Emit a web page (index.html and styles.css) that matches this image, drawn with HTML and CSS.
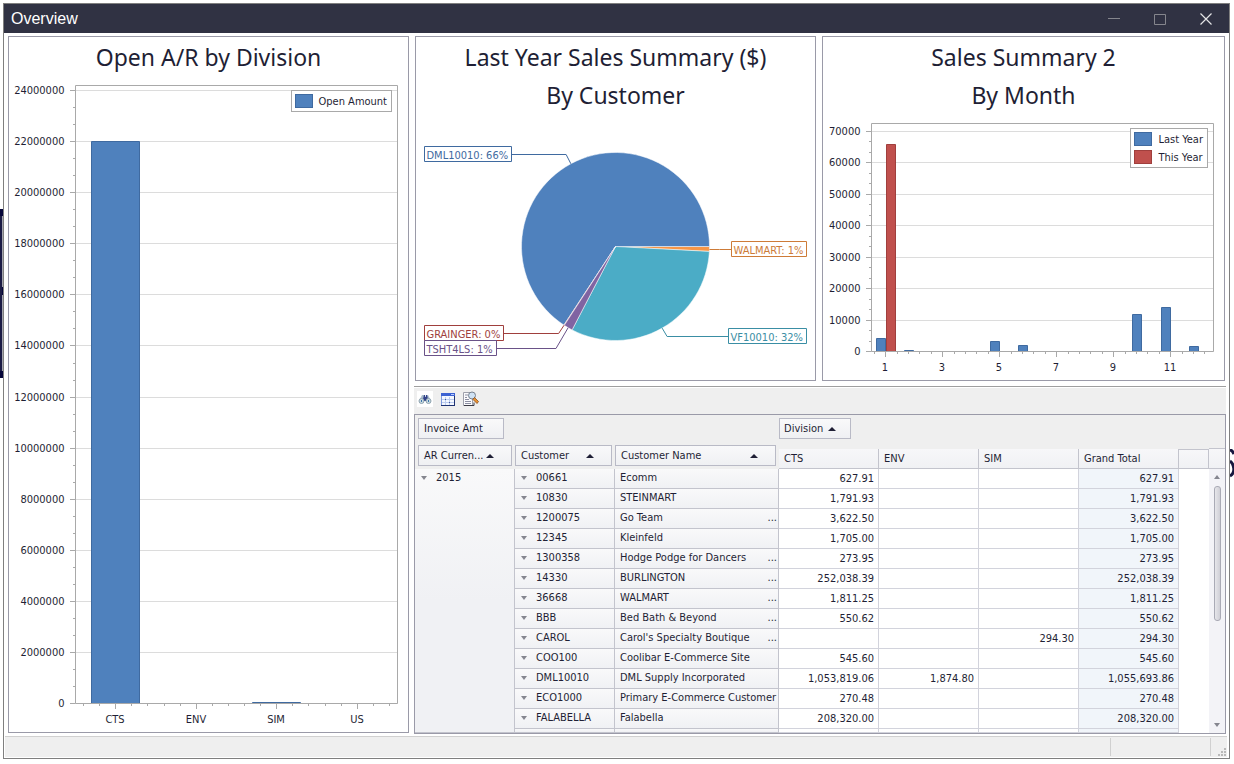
FILE: index.html
```html
<!DOCTYPE html>
<html lang="en">
<head>
    <meta charset="UTF-8">
    <meta name="viewport" content="width=device-width, initial-scale=1.0">
    <title>Overview</title>
    <link rel="stylesheet" href="styles.css">
</head>
<body>

    <!-- pieces of the desktop that show behind the window -->
    <svg class="behind-left" width="3" height="172" aria-hidden="true">
        <path d="M0 1h3v7H0zM0 79h3v8H0zM0 163h3v7H0z" fill="#06063a"/>
        <path d="M0 8h2v155H0z" fill="#1c1c45"/>
        <path d="M2 8h1v71H2zM2 87h1v76H2z" fill="#a5a5ad"/>
    </svg>
    <svg class="behind-right" width="4" height="30" aria-hidden="true">
        <path d="M0 1C2 1 3 3 4 5M0 12C3 14 5 20 3 24Q2 26 0 27" fill="none" stroke="#17173f" stroke-width="3"/>
    </svg>

    <div class="window">
        <header class="titlebar">
            <h1>Overview</h1>
            <div class="window-buttons">
                <button type="button" aria-label="Minimize"><svg width="12" height="12"><path d="M0 5.5h12" stroke="#85868d"/></svg></button>
                <button type="button" aria-label="Maximize"><svg width="12" height="12"><path d="M.5 1.5h11v10H.5z" fill="none" stroke="#85868d"/></svg></button>
                <button type="button" aria-label="Close"><svg width="12" height="12"><path d="M.5 .5l11 11M11.5 .5l-11 11" stroke="#e4e4e6" stroke-width="1.2"/></svg></button>
            </div>
        </header>

        <main class="dashboard">
            <section class="panel panel-tall">
                <h2>Open A/R by Division</h2>
                <div class="chart">
                    <svg id="division-chart"></svg>
                    <ul class="legend">
                        <li><span class="swatch blue"></span>Open Amount</li>
                    </ul>
                </div>
            </section>

            <section class="panel">
                <h2>Last Year Sales Summary ($)<br>By Customer</h2>
                <div class="chart">
                    <svg id="customer-chart"></svg>
                </div>
            </section>

            <section class="panel">
                <h2>Sales Summary 2<br>By Month</h2>
                <div class="chart">
                    <svg id="month-chart"></svg>
                    <ul class="legend">
                        <li><span class="swatch blue"></span>Last Year</li>
                        <li><span class="swatch red"></span>This Year</li>
                    </ul>
                </div>
            </section>

            <section class="details">
                <div class="toolbar">
                    <button type="button" class="find" aria-label="Find">
                        <svg width="16" height="16">
                            <path d="M5 4h2l1 2 1-2h2l2 4-4 1H7L3 8z" fill="#a9bccb"/>
                            <path d="M7 4h1v2h1V4h1l1 4-2 2H7L6 8z" fill="#33428a"/>
                            <circle cx="4.500" cy="10" r="2.500" fill="#c9dbe2" stroke="#8fa3b0"/>
                            <circle cx="11.500" cy="10" r="2.500" fill="#c9dbe2" stroke="#8fa3b0"/>
                            <path d="M4 9h1v2H4zM11 9h1v2h-1z" fill="#3d74a8"/>
                        </svg>
                    </button>
                    <button type="button" aria-label="Grid">
                        <svg width="16" height="16">
                            <path d="M1 2h14v13H1z" fill="#f4f8ff"/>
                            <path d="M1 2h14v3H1z" fill="#3c62d2"/>
                            <path d="M11 3h3v1h-3z" fill="#b8caff"/>
                            <path d="M2 8.500h12M2 11.500h12M5.500 6v8M9.500 6v8" stroke="#bccdf0"/>
                            <path d="M5 8h1v1H5zM9 11h1v1H9z" fill="#45599c"/>
                            <path d="M1.500 5v9.500" stroke="#7f9be0"/>
                            <path d="M1 14.500h14M14.500 5v10" stroke="#1f3373"/>
                        </svg>
                    </button>
                    <button type="button" aria-label="Print preview">
                        <svg width="16" height="16">
                            <path d="M.5 1.500h9v13h-9z" fill="#fbfbfd" stroke="#9ea0ab"/>
                            <path d="M1 14.500h10v-3" fill="none" stroke="#3b3b45"/>
                            <path d="M2 4h3M2 6.500h2M2 8.500h4M2 10.500h6M2 12.500h6" stroke="#8c8fa2"/>
                            <circle cx="9" cy="4.500" r="3.500" fill="#cfe2f4" stroke="#77818f"/>
                            <path d="M11.500 6.500l4 4-1.500 2-4-4z" fill="#e8902f" stroke="#7c4212" stroke-width=".7"/>
                        </svg>
                    </button>
                </div>

                <div class="pivot">
                    <table>
                        <colgroup>
                            <col class="col-value">
                            <col class="col-value">
                            <col class="col-name">
                            <col class="col-value">
                            <col class="col-value">
                            <col class="col-value">
                            <col class="col-value">
                            <col>
                        </colgroup>
                        <thead>
                            <tr class="field-row">
                                <td colspan="3" rowspan="2">
                                    <div class="fields">
                                        <button type="button" class="field data-field">Invoice Amt</button>
                                    </div>
                                    <div class="fields row-fields">
                                        <button type="button" class="field currency-field">AR Curren...<i class="sort"></i></button>
                                        <button type="button" class="field customer-field">Customer<i class="sort"></i></button>
                                        <button type="button" class="field name-field">Customer Name<i class="sort"></i></button>
                                    </div>
                                </td>
                                <td colspan="5">
                                    <div class="fields">
                                        <button type="button" class="field division-field">Division<i class="sort"></i></button>
                                    </div>
                                </td>
                            </tr>
                            <tr class="column-row">
                                <th scope="col">CTS</th>
                                <th scope="col">ENV</th>
                                <th scope="col">SIM</th>
                                <th scope="col">Grand Total</th>
                                <th class="filler"></th>
                            </tr>
                        </thead>
                        <tbody>
                            <tr>
                                <th class="year" rowspan="14" scope="rowgroup"><i class="expand"></i>2015</th>
                                <th class="customer" scope="row"><i class="expand"></i>00661</th>
                                <td class="name">Ecomm</td>
                                <td>627.91</td><td></td><td></td><td class="total">627.91</td><td class="filler"></td>
                            </tr>
                            <tr>
                                <th class="customer" scope="row"><i class="expand"></i>10830</th>
                                <td class="name">STEINMART</td>
                                <td>1,791.93</td><td></td><td></td><td class="total">1,791.93</td><td class="filler"></td>
                            </tr>
                            <tr>
                                <th class="customer" scope="row"><i class="expand"></i>1200075</th>
                                <td class="name">Go Team<span class="more">...</span></td>
                                <td>3,622.50</td><td></td><td></td><td class="total">3,622.50</td><td class="filler"></td>
                            </tr>
                            <tr>
                                <th class="customer" scope="row"><i class="expand"></i>12345</th>
                                <td class="name">Kleinfeld</td>
                                <td>1,705.00</td><td></td><td></td><td class="total">1,705.00</td><td class="filler"></td>
                            </tr>
                            <tr>
                                <th class="customer" scope="row"><i class="expand"></i>1300358</th>
                                <td class="name">Hodge Podge for Dancers<span class="more">...</span></td>
                                <td>273.95</td><td></td><td></td><td class="total">273.95</td><td class="filler"></td>
                            </tr>
                            <tr>
                                <th class="customer" scope="row"><i class="expand"></i>14330</th>
                                <td class="name">BURLINGTON<span class="more">...</span></td>
                                <td>252,038.39</td><td></td><td></td><td class="total">252,038.39</td><td class="filler"></td>
                            </tr>
                            <tr>
                                <th class="customer" scope="row"><i class="expand"></i>36668</th>
                                <td class="name">WALMART<span class="more">...</span></td>
                                <td>1,811.25</td><td></td><td></td><td class="total">1,811.25</td><td class="filler"></td>
                            </tr>
                            <tr>
                                <th class="customer" scope="row"><i class="expand"></i>BBB</th>
                                <td class="name">Bed Bath &amp; Beyond<span class="more">...</span></td>
                                <td>550.62</td><td></td><td></td><td class="total">550.62</td><td class="filler"></td>
                            </tr>
                            <tr>
                                <th class="customer" scope="row"><i class="expand"></i>CAROL</th>
                                <td class="name">Carol's Specialty Boutique<span class="more">...</span></td>
                                <td></td><td></td><td>294.30</td><td class="total">294.30</td><td class="filler"></td>
                            </tr>
                            <tr>
                                <th class="customer" scope="row"><i class="expand"></i>COO100</th>
                                <td class="name">Coolibar E-Commerce Site</td>
                                <td>545.60</td><td></td><td></td><td class="total">545.60</td><td class="filler"></td>
                            </tr>
                            <tr>
                                <th class="customer" scope="row"><i class="expand"></i>DML10010</th>
                                <td class="name">DML Supply Incorporated</td>
                                <td>1,053,819.06</td><td>1,874.80</td><td></td><td class="total">1,055,693.86</td><td class="filler"></td>
                            </tr>
                            <tr>
                                <th class="customer" scope="row"><i class="expand"></i>ECO1000</th>
                                <td class="name">Primary E-Commerce Customer</td>
                                <td>270.48</td><td></td><td></td><td class="total">270.48</td><td class="filler"></td>
                            </tr>
                            <tr>
                                <th class="customer" scope="row"><i class="expand"></i>FALABELLA</th>
                                <td class="name">Falabella</td>
                                <td>208,320.00</td><td></td><td></td><td class="total">208,320.00</td><td class="filler"></td>
                            </tr>
                            <tr class="cut-row">
                                <td class="customer"></td>
                                <td class="name"></td>
                                <td></td><td></td><td></td><td class="total"></td><td class="filler"></td>
                            </tr>
                        </tbody>
                    </table>
                    <div class="scroll-column">
                        <div class="scroll-head"></div>
                        <div class="scrollbar">
                            <i class="arrow up"></i>
                            <div class="thumb"></div>
                            <i class="arrow down"></i>
                        </div>
                    </div>
                </div>
            </section>
        </main>

        <footer class="statusbar">
            <div class="status-cell"></div>
            <div class="status-grip">
                <svg width="8" height="8" fill="#b9b9b9"><path d="M6 0h2v2H6zM3 3h2v2H3zM6 3h2v2H6zM0 6h2v2H0zM3 6h2v2H3zM6 6h2v2H6z"/></svg>
            </div>
        </footer>
    </div>

    <script src="charts.js"></script>
</body>
</html>
```

FILE: styles.css
```css
* {
    box-sizing: border-box;
}
body {
    margin: 0;
    padding: 3px 4px 5px 3px;
    min-height: 100vh;
    display: flex;
    position: relative;
    background: #fff;
    color: #1f1f35;
    font-family: Tahoma, "DejaVu Sans Condensed", "Noto Sans", sans-serif;
    font-size: 11px;
}
h1, h2, ul {
    margin: 0;
    padding: 0;
    font-weight: normal;
}
button {
    font: inherit;
    color: inherit;
    padding: 0;
    border: none;
    background: none;
}
svg {
    display: block;
}
.behind-left {
    position: absolute;
    left: 0;
    top: 208px;
}
.behind-right {
    position: absolute;
    right: 0;
    top: 449px;
}
.window {
    flex: 1;
    min-width: 0;
    display: flex;
    flex-direction: column;
    border: 1px solid #7f7f7f;
    background: #fff;
}

/* title bar */
.titlebar {
    display: flex;
    align-items: center;
    justify-content: space-between;
    height: 29px;
    padding-left: 7px;
    background: #303243;
    color: #fff;
}
.titlebar h1 {
    font-family: "Liberation Sans", Arial, sans-serif;
    font-size: 16px;
}
.window-buttons {
    display: flex;
}
.window-buttons button {
    display: flex;
    justify-content: center;
    align-items: center;
    width: 46px;
    height: 29px;
}

/* panels */
.dashboard {
    flex: 1;
    display: grid;
    grid-template-columns: 401fr 401fr 403fr;
    grid-template-rows: 1fr auto;
    column-gap: 6px;
    row-gap: 5px;
    padding: 3px 4px 2px;
}
.panel {
    display: flex;
    flex-direction: column;
    min-width: 0;
    padding-top: 1px;
    border: 1px solid #9a9aa8;
}
.panel-tall {
    grid-row: 1 / 3;
    margin-bottom: 1px;
}
.panel h2 {
    font-family: Tahoma, "Noto Sans", sans-serif;
    font-size: 23px;
    line-height: 38px;
    text-align: center;
}
.chart {
    position: relative;
    flex: 1;
    min-height: 200px;
}
.chart svg {
    position: absolute;
    width: 100%;
    height: 100%;
}
.chart text {
    fill: #1f1f35;
}
.legend {
    position: absolute;
    top: 14px;
    right: 16px;
    display: grid;
    gap: 4px;
    padding: 3px 4px 3px 3px;
    border: 1px solid #a9a9a9;
    background: #fff;
    list-style: none;
}
.legend li {
    display: flex;
    align-items: center;
    gap: 6px;
    height: 14px;
}
.swatch {
    width: 18px;
    height: 14px;
    border: 1px solid;
}
.swatch.blue {
    background: #4f81bd;
    border-color: #3f6aa0;
}
.swatch.red {
    background: #c0504d;
    border-color: #a03f3d;
}

/* pivot grid */
.details {
    grid-column: 2 / 4;
    min-width: 0;
    margin: 0 -1px;
    border-top: 1px solid #9f9f9f;
    padding-top: 1px;
}
.toolbar {
    display: flex;
    gap: 7px;
    height: 26px;
    padding: 3px 3px 0;
    background: #efefef;
}
.toolbar button {
    width: 16px;
    height: 16px;
}
.toolbar .find {
    background: #fff;
}
.pivot {
    display: flex;
    border: 1px solid #9a9aa8;
    background: #fff;
    overflow: hidden;
}
table {
    flex: 1;
    width: 100%;
    min-width: 0;
    table-layout: fixed;
    border-collapse: separate;
    border-spacing: 0;
}
.col-value {
    width: 100px;
}
.col-name {
    width: 164px;
}
th, td {
    height: 20px;
    padding: 1px 4px 0;
    font-weight: normal;
    text-align: right;
    line-height: 18px;
    white-space: nowrap;
    border-right: 1px solid #d2d3dc;
    border-bottom: 1px solid #d2d3dc;
}
.field-row td {
    padding: 0;
    border: none;
    text-align: left;
    vertical-align: top;
    background: #efefef;
}
.field-row {
    height: 34px;
}
.fields {
    display: flex;
    gap: 3px;
    padding-top: 3px;
}
.row-fields {
    padding-top: 6px;
}
.data-field, .currency-field {
    margin-left: 3px;
}
.field {
    display: flex;
    align-items: center;
    justify-content: space-between;
    height: 21px;
    padding: 0 17px 0 5px;
    border: 1px solid #b9bac6;
    background: linear-gradient(#f9f9fa, #eff0f3);
}
.data-field {
    width: 86px;
    padding-right: 5px;
}
.currency-field {
    width: 94px;
}
.customer-field {
    width: 97px;
}
.name-field {
    width: 161px;
}
.division-field {
    justify-content: flex-start;
    gap: 5px;
    width: 72px;
    padding: 0 4px;
}
.sort {
    border: 4px solid transparent;
    border-top: none;
    border-bottom-color: #1f1f35;
}
.column-row th {
    padding: 0 5px;
    text-align: left;
    background: linear-gradient(#f7f7f9, #f0f1f4);
    border-color: #c3c4cd;
}
.column-row .filler {
    border-top: 1px solid #c3c4cd;
}
.year, .customer, .name {
    text-align: left;
    padding: 0 0 1px 5px;
    background: linear-gradient(#f9f9fa, #f0f1f4);
    border-color: #c3c4cd;
}
.year {
    vertical-align: top;
    background: linear-gradient(#f9f9fa, #f0f1f4 50%);
}
.expand {
    display: inline-block;
    margin: 0 9px 1px 1px;
    border: 3px solid transparent;
    border-top: 4px solid #85868f;
    border-bottom: none;
}
.more {
    float: right;
    padding-right: 1px;
}
.total {
    background: #f1f5fa;
}
tbody .filler {
    border: none;
}
.cut-row td {
    height: 4px;
    padding: 0;
    line-height: 0;
}
.scroll-column {
    display: flex;
    flex-direction: column;
    width: 16px;
    padding-top: 33px;
    background: #efefef;
}
.scroll-head {
    height: 21px;
    border-top: 1px solid #c3c4cd;
    border-bottom: 1px solid #c3c4cd;
    background: linear-gradient(#f7f7f9, #f0f1f4);
}
.scrollbar {
    flex: 1;
    display: flex;
    flex-direction: column;
    align-items: center;
    padding: 6px 0;
    background: #f3f3f7;
}
.arrow {
    border: 3px solid transparent;
}
.arrow.up {
    border-top: none;
    border-bottom: 4px solid #85868f;
}
.arrow.down {
    margin-top: auto;
    border-bottom: none;
    border-top: 4px solid #85868f;
}
.thumb {
    width: 7px;
    height: 135px;
    margin-top: 7px;
    border: 1px solid #a9aab5;
    border-radius: 3px;
    background: linear-gradient(90deg, #e6e6ea, #cfcfd6);
}

/* status bar */
.statusbar {
    display: flex;
    justify-content: flex-end;
    height: 21px;
    margin: 0 2px 1px 1px;
    border-top: 1px solid #d0d0d0;
    background: #efefef;
}
.status-cell, .status-grip {
    margin: 1px 0;
    border-left: 1px solid #d0d0d0;
}
.status-cell {
    width: 100px;
}
.status-grip {
    display: flex;
    align-items: flex-end;
    justify-content: flex-end;
    width: 17px;
    padding: 0 1px 0 0;
}
```

FILE: charts.js
```javascript
const SVG_NS = 'http://www.w3.org/2000/svg';

const divisions = {
    labels: ['CTS', 'ENV', 'SIM', 'US'],
    labelEvery: 1,
    left: 66,
    step: 2000000,
    barWidth: 0.61,
    series: [{ values: [22000000, 0, 40000, 0], fill: '#4f81bd', stroke: '#3f6aa0' }]
};

const months = {
    labels: ['1', '2', '3', '4', '5', '6', '7', '8', '9', '10', '11', '12'],
    labelEvery: 2,
    left: 48,
    step: 10000,
    barWidth: 0.7,
    series: [
        { values: [4200, 400, 0, 0, 3200, 1900, 0, 0, 0, 11800, 14000, 1600], fill: '#4f81bd', stroke: '#3f6aa0' },
        { values: [65900, 0, 0, 0, 0, 0, 0, 0, 0, 0, 0, 0], fill: '#c0504d', stroke: '#a03f3d' }
    ]
};

// angles are in degrees, clockwise from 3 o'clock
const customers = [
    { text: 'WALMART: 1%', from: 0, to: 3, fill: '#f79646', line: '#cd7b38' },
    { text: 'VF10010: 32%', from: 3, to: 117.5, fill: '#4bacc6', line: '#3a8ea4' },
    { text: 'DML10010: 66%', from: 123.3, to: 360, fill: '#4f81bd', line: '#3f6aa0' },
    { text: 'GRAINGER: 0%', from: 123, to: 123.3, fill: '#c0504d', line: '#a03f3d' },
    { text: 'TSHT4LS: 1%', from: 117.5, to: 123, fill: '#8064a2', line: '#6a5288' }
];

function add(parent, name, attrs, text) {
    const node = document.createElementNS(SVG_NS, name);
    for (const key in attrs) {
        node.setAttribute(key, attrs[key]);
    }
    if (text) {
        node.textContent = text;
    }
    parent.appendChild(node);
    return node;
}

function line(svg, x1, y1, x2, y2, color) {
    add(svg, 'path', { d: `M${x1} ${y1}L${x2} ${y2}`, stroke: color, fill: 'none' });
}

function drawBars(svg, chart) {
    svg.innerHTML = '';
    const left = chart.left + 0.5;
    const top = 9.5;
    const right = svg.clientWidth - 10.5;
    const bottom = Math.round(svg.clientHeight) - 28.5;
    const max = Math.max(...chart.series.flatMap(s => s.values)) * 1.1;
    const slot = (right - left) / chart.labels.length;
    const yOf = value => Math.round(bottom - 0.5 - value / max * (bottom - top)) + 0.5;

    // value axis
    for (let i = 0; i * chart.step / 3 <= max; i++) {
        const value = i * chart.step / 3;
        const y = yOf(value);
        if (i % 3) {
            line(svg, left - 2.5, y, left, y, '#a9a9a9');
            continue;
        }
        line(svg, left - 5.5, y, left, y, '#a9a9a9');
        line(svg, left, y, right, y, '#dcdcdc');
        add(svg, 'text', { x: left - 11, y: y + 3, 'text-anchor': 'end' }, String(value));
    }

    // category axis
    const minor = slot * chart.labelEvery / 5;
    for (let i = -2; left + slot / 2 + i * minor < right; i++) {
        const x = Math.floor(left + slot / 2 + i * minor) + 0.5;
        if (x > left) {
            line(svg, x, bottom, x, bottom + (i % 5 ? 2.5 : 5.5), '#a9a9a9');
        }
    }
    chart.labels.forEach((label, i) => {
        if (i % chart.labelEvery === 0) {
            add(svg, 'text', { x: Math.floor(left + slot * (i + 0.5)), y: bottom + 19, 'text-anchor': 'middle' }, label);
        }
    });
    add(svg, 'path', { d: `M${left} ${top}H${right}V${bottom}H${left}z`, fill: 'none', stroke: '#a9a9a9' });

    // bars
    const width = slot * chart.barWidth / chart.series.length;
    chart.series.forEach((series, s) => {
        series.values.forEach((value, i) => {
            if (!value) {
                return;
            }
            const start = left + slot * (i + 0.5) + (s - chart.series.length / 2) * width;
            const x = Math.round(start) + 0.5;
            const y = Math.min(yOf(value), bottom - 1);
            add(svg, 'path', {
                d: `M${x} ${bottom - 0.5}V${y}H${x + Math.round(width) - 1}V${bottom - 0.5}`,
                fill: series.fill, stroke: series.stroke
            });
        });
    });
}

function drawPie(svg) {
    svg.innerHTML = '';
    const w = svg.clientWidth;
    const h = svg.clientHeight;
    const cx = w / 2;
    const cy = Math.floor(h / 2) - 0.5;
    const r = h / 2 - 39;
    const point = (deg, radius) => [
        cx + Math.cos(deg * Math.PI / 180) * radius,
        cy + Math.sin(deg * Math.PI / 180) * radius
    ];

    customers.forEach(c => {
        const large = c.to - c.from > 180 ? 1 : 0;
        add(svg, 'path', {
            d: `M${cx} ${cy}L${point(c.from, r)}A${r} ${r} 0 ${large} 1 ${point(c.to, r)}z`,
            fill: c.fill, stroke: '#fff', 'stroke-opacity': 0.5
        });
    });

    let lastLeft = -100;
    customers.forEach(c => {
        const mid = (c.from + c.to) / 2;
        const onRight = Math.cos(mid * Math.PI / 180) > 0;
        const edge = point(mid, r);
        let end = point(mid, r + 10);
        // keep the labels of the left side from overlapping
        if (!onRight && Math.abs(end[1] - lastLeft) < 15) {
            end = point(mid, (lastLeft + 15 - cy) / Math.sin(mid * Math.PI / 180));
        }
        if (!onRight) {
            lastLeft = end[1];
        }
        const y = Math.floor(end[1]) + 0.5;
        // nearly level slices get a straight line
        if (Math.abs(edge[1] - y) < 1) {
            edge[1] = y;
        }
        const text = add(svg, 'text', { y: y + 4, style: `fill: ${c.line}` }, c.text);
        const width = Math.ceil(text.getComputedTextLength()) + 5;
        const x = (onRight ? Math.round(w) - 9 - width : 8) + 0.5;
        text.setAttribute('x', x + 2);
        add(svg, 'path', { d: `M${x} ${y - 8}h${width}v15h${-width}z`, fill: 'none', stroke: c.line });
        add(svg, 'path', { d: `M${edge}L${end[0]} ${y}H${onRight ? x : x + width}`, fill: 'none', stroke: c.line });
    });
}

function draw() {
    drawBars(document.getElementById('division-chart'), divisions);
    drawPie(document.getElementById('customer-chart'));
    drawBars(document.getElementById('month-chart'), months);
}

window.addEventListener('resize', draw);
draw();
```
